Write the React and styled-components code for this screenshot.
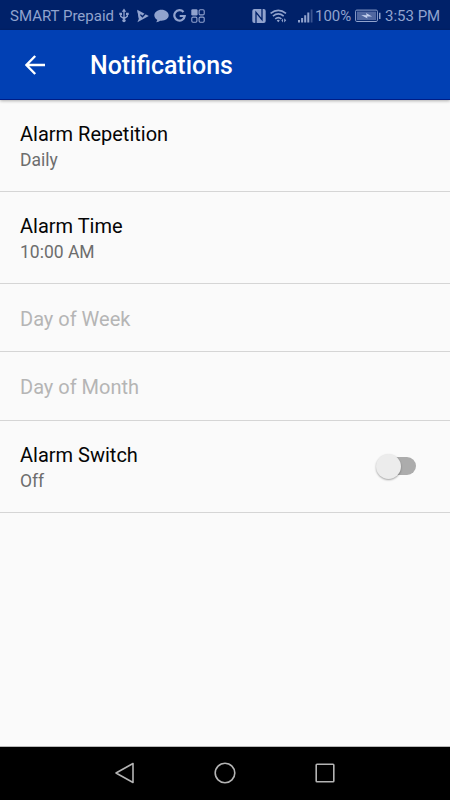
import { useState } from 'react'
import styled, { createGlobalStyle } from 'styled-components'

const vars = {
    status: '#002169',
    statusText: '#91a3ce',
    bar: '#0140b4',
    bg: '#fafafa',
    text: '#050505',
    muted: '#6d6d6d',
    disabled: '#b5b5b5',
    border: '#d5d5d5',
    nav: '#b4b4b4',
}

const GlobalStyle = createGlobalStyle`
    body {
        margin: 0;
        font-family: Roboto, 'Liberation Sans', sans-serif;
        background: ${vars.bg};
    }
`

const Screen = styled.div`
    display: flex;
    flex-direction: column;
    height: 100vh;
    overflow: hidden;
    background: ${vars.bg};
`

const StatusBar = styled.div`
    display: flex;
    justify-content: space-between;
    align-items: center;
    flex: none;
    height: 30px;
    padding: 1px 10px 0;
    box-sizing: border-box;
    background: ${vars.status};
    color: ${vars.statusText};
`

const StatusGroup = styled.div`
    display: flex;
    align-items: center;
`

const StatusText = styled.span`
    width: ${(p) => p.$width}px;
    margin-left: ${(p) => p.$gap || 0}px;
    font-size: 15px;
    line-height: 20px;
    white-space: nowrap;
`

const StatusIcon = styled.svg`
    display: block;
    flex: none;
    width: ${(p) => p.$width}px;
    height: 16px;
    margin-left: ${(p) => p.$gap}px;
    color: ${vars.statusText};
`

const AppBar = styled.header`
    position: relative;
    display: flex;
    align-items: center;
    flex: none;
    height: 70px;
    padding-left: 25px;
    box-sizing: border-box;
    background: ${vars.bar};
    border-bottom: 1px solid #001d86;
    box-shadow: 0 1px 3px rgba(0, 0, 0, 0.3);
`

const BackButton = styled.button`
    display: block;
    width: 20px;
    height: 20px;
    padding: 0;
    border: none;
    background: transparent;
    color: #ffffff;
`

const Title = styled.h1`
    margin: 3px 0 0 45px;
    font-size: 24.9px;
    font-weight: 500;
    line-height: 30px;
    color: #ffffff;
`

const List = styled.main`
    flex: 1;
`

const Row = styled.div`
    display: flex;
    align-items: center;
    justify-content: space-between;
    height: ${(p) => p.$height}px;
    padding: 0 34px 0 20px;
    box-sizing: border-box;
    border-bottom: 1px solid ${vars.border};
`

const RowText = styled.div`
    padding-top: 2px;
`

const RowTitle = styled.div`
    font-size: 20px;
    line-height: 26px;
    color: ${(p) => (p.$disabled ? vars.disabled : vars.text)};
`

const RowSummary = styled.div`
    padding-top: 1px;
    font-size: 17.5px;
    line-height: 25px;
    color: ${vars.muted};
`

const Switch = styled.button`
    display: flex;
    align-items: center;
    justify-content: ${(p) => (p.$on ? 'flex-end' : 'flex-start')};
    width: 35px;
    height: 18px;
    margin-bottom: 1px;
    padding: 0;
    border: none;
    border-radius: 9px;
    background: ${(p) => (p.$on ? '#80a0da' : '#acacac')};
`

const Thumb = styled.span`
    flex: none;
    width: 25px;
    height: 25px;
    margin: 0 -5px;
    border-radius: 50%;
    background: ${(p) => (p.$on ? vars.bar : '#ececec')};
    box-shadow: 0 1px 2px rgba(0, 0, 0, 0.35);
`

const NavBar = styled.nav`
    display: flex;
    align-items: center;
    justify-content: center;
    gap: 76px;
    flex: none;
    height: 54px;
    padding-bottom: 1px;
    box-sizing: border-box;
    border-top: 1px solid #b9b9b9;
    background: #000000;
`

const NavIcon = styled.svg`
    display: block;
    width: 24px;
    height: 24px;
    fill: none;
    stroke: ${vars.nav};
    stroke-width: 1.6;
    stroke-linejoin: round;
`

function Notifications() {
    return (
        <>
            {/* usb */}
            <StatusIcon $width={10} $gap={6} viewBox="0 0 10 16">
                <path
                    d="M5 3v9M1.7 6v2.4L5 10.8l3.3-2.4V6"
                    fill="none"
                    stroke="currentColor"
                    strokeWidth="1.3"
                />
                <path
                    d="M5 .6l2.2 3.2H2.8zM.3 4.8h2.7v2.3H.3zM7 4.8h2.7v2.3H7z"
                    fill="currentColor"
                />
                <circle cx="5" cy="12.6" r="1.7" fill="currentColor" />
            </StatusIcon>
            {/* play store */}
            <StatusIcon $width={12} $gap={8} viewBox="0 0 12 16">
                <path d="M.2 1.8L11.8 8 .4 14.2l1.5-3.4z" fill="currentColor" />
                <path d="M.2 1.8l1.7 9 2-1z" fill="currentColor" />
                <path
                    d="M3.4 6.6l2 2.2 3.8-4"
                    fill="none"
                    stroke={vars.status}
                    strokeWidth="1.3"
                />
            </StatusIcon>
            {/* message */}
            <StatusIcon $width={15} $gap={5} viewBox="0 0 15 16">
                <path
                    d="M7.5 1.7C3.5 1.7.3 4.2.3 7.3c0 1.9 1.1 3.5 2.9 4.5 0 1-.5 1.8-1.1 2.4 1.7-.1 3-.6 4.1-1.5 4.7.5 8.5-2 8.5-5.4 0-3.1-3.2-5.6-7.2-5.6z"
                    fill="currentColor"
                />
            </StatusIcon>
            {/* google */}
            <StatusIcon $width={13} $gap={4} viewBox="0 0 13 16">
                <path
                    d="M10.5 4A5.2 5.2 0 1 0 11.7 8H6.7"
                    fill="none"
                    stroke="currentColor"
                    strokeWidth="2.2"
                />
            </StatusIcon>
            {/* app grid */}
            <StatusIcon $width={14} $gap={5} viewBox="0 0 14 16">
                <rect x=".3" y="1.3" width="6.3" height="6.3" rx="1.3" fill="currentColor" />
                <g fill="none" stroke="currentColor" strokeWidth="1.1">
                    <rect x="8.1" y="1.8" width="5.1" height="5.1" rx="1.2" />
                    <rect x=".8" y="9.1" width="5.1" height="5.1" rx="1.2" />
                    <rect x="8.1" y="9.1" width="5.1" height="5.1" rx="1.2" />
                </g>
            </StatusIcon>
        </>
    )
}

function Signals() {
    return (
        <>
            {/* nfc */}
            <StatusIcon $width={14} $gap={0} viewBox="0 0 14 16">
                <rect x=".3" y="1" width="13.4" height="14" rx="2" fill="currentColor" />
                <path
                    d="M4 15V4.4l6 7.2V1"
                    fill="none"
                    stroke={vars.status}
                    strokeWidth="1.3"
                />
            </StatusIcon>
            {/* wifi */}
            <StatusIcon $width={17} $gap={4} viewBox="0 0 17 16">
                <g fill="none" stroke="currentColor" strokeWidth="1.6">
                    <path d="M.6 5.4q7.7-6.1 15.4 0" />
                    <path d="M2.9 8.2q5.4-4.5 10.8 0" />
                    <path d="M5.2 10.9q3.1-2.6 6.2 0" />
                </g>
                <path
                    d="M6.7 12.4q1.6-1.2 3.1 0L8.3 14.3zM13 10.5l-1.6 2 1.6 1.9zM14.2 10.2l2 2-2 2.2z"
                    fill="currentColor"
                />
            </StatusIcon>
            {/* cell signal */}
            <StatusIcon $width={15} $gap={11} viewBox="0 0 15 16">
                <path
                    d="M0 12h2v2.5H0zM3.1 10h2v4.5h-2zM6.2 7.3h2v7.2h-2zM9.3 4.5h2v10h-2z"
                    fill="currentColor"
                />
                <path d="M12.7 1.5h1.8v13h-1.8z" fill="currentColor" opacity=".4" />
            </StatusIcon>
        </>
    )
}

function Battery() {
    return (
        <StatusIcon $width={26} $gap={4} viewBox="0 0 26 16">
            <rect
                x=".6"
                y="2.1"
                width="21.8"
                height="11.4"
                rx="1.2"
                fill="none"
                stroke="currentColor"
            />
            <path d="M2 3.5h19v8.6H2z" fill="currentColor" opacity=".55" />
            <path d="M24 4.7h1.5v6.2H24z" fill="currentColor" />
            <path d="M6.2 7.1l5.4.2-.6-2.2 6.1 3.4-5.1-.1.5 2.2z" fill="#c3cfed" />
        </StatusIcon>
    )
}

const settings = [
    { title: 'Alarm Repetition', summary: 'Daily', height: 92 },
    { title: 'Alarm Time', summary: '10:00 AM', height: 92 },
    { title: 'Day of Week', disabled: true, height: 68 },
    { title: 'Day of Month', disabled: true, height: 69 },
]

export default function App() {
    const [on, setOn] = useState(false)

    return (
        <Screen>
            <GlobalStyle />
            <StatusBar>
                <StatusGroup>
                    <StatusText $width={103}>SMART Prepaid</StatusText>
                    <Notifications />
                </StatusGroup>
                <StatusGroup>
                    <Signals />
                    <StatusText $width={36} $gap={2}>
                        100%
                    </StatusText>
                    <Battery />
                    <StatusText $width={55} $gap={4}>
                        3:53 PM
                    </StatusText>
                </StatusGroup>
            </StatusBar>

            <AppBar>
                <BackButton aria-label="Back">
                    <svg width="20" height="20" viewBox="0 0 20 20">
                        <path
                            d="M20 10H2M10.2 1L1.4 10l8.8 9"
                            fill="none"
                            stroke="currentColor"
                            strokeWidth="2.4"
                        />
                    </svg>
                </BackButton>
                <Title>Notifications</Title>
            </AppBar>

            <List>
                {settings.map((s) => (
                    <Row key={s.title} $height={s.height}>
                        <RowText>
                            <RowTitle $disabled={s.disabled}>{s.title}</RowTitle>
                            {s.summary && <RowSummary>{s.summary}</RowSummary>}
                        </RowText>
                    </Row>
                ))}
                <Row $height={92}>
                    <RowText>
                        <RowTitle>Alarm Switch</RowTitle>
                        <RowSummary>{on ? 'On' : 'Off'}</RowSummary>
                    </RowText>
                    <Switch
                        role="switch"
                        aria-checked={on}
                        aria-label="Alarm Switch"
                        $on={on}
                        onClick={() => setOn(!on)}>
                        <Thumb $on={on} />
                    </Switch>
                </Row>
            </List>

            <NavBar>
                <NavIcon viewBox="0 0 24 24">
                    <path d="M3 12L20 2.5v19z" />
                </NavIcon>
                <NavIcon viewBox="0 0 24 24">
                    <circle cx="12" cy="12" r="9.8" />
                </NavIcon>
                <NavIcon viewBox="0 0 24 24">
                    <rect x="3.2" y="3.2" width="17.6" height="17.6" rx=".8" />
                </NavIcon>
            </NavBar>
        </Screen>
    )
}
